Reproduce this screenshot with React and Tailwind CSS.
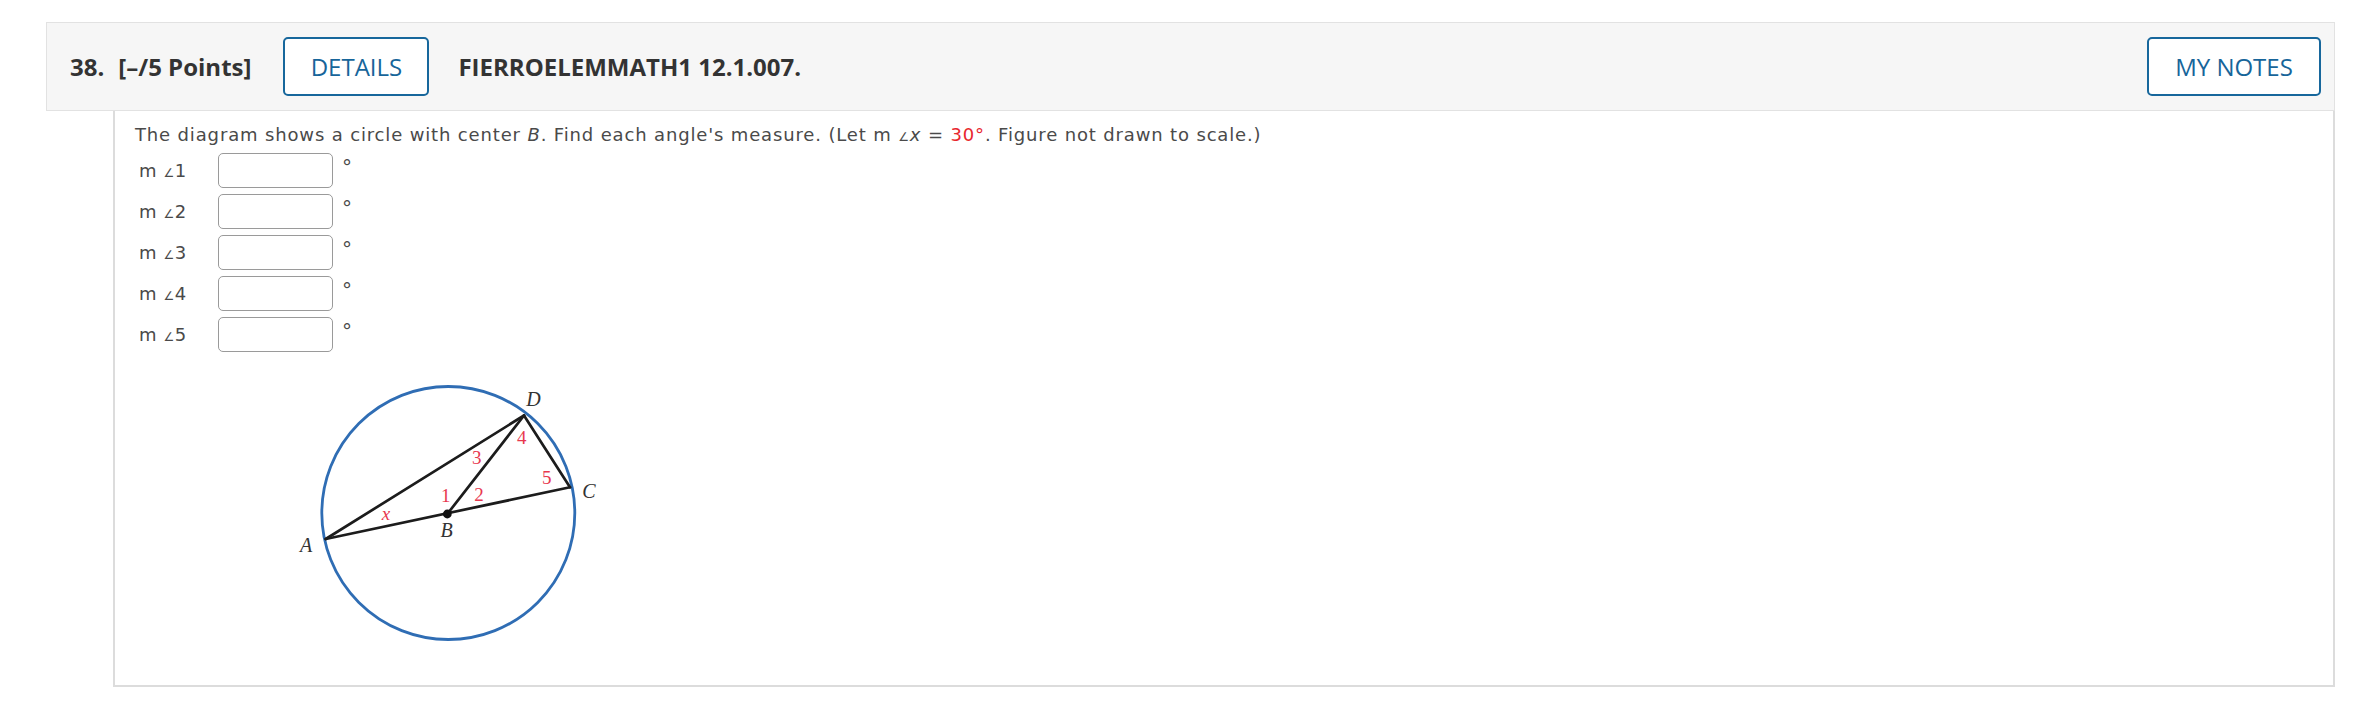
import React from "react";

const rows = ["1", "2", "3", "4", "5"];

function Diagram() {
  const blue = "#2f6db4";
  const red = "#e8384f";
  const ink = "#1c1c1c";
  return (
    <svg width="340" height="280" viewBox="0 0 340 280" className="block">
      <circle cx="168.3" cy="143" r="126.5" fill="none" stroke={blue} strokeWidth="2.8" />
      <g stroke={ink} strokeWidth="2.7" fill="none" strokeLinejoin="round" strokeLinecap="round">
        <line x1="45.7" y1="169" x2="290" y2="117.3" />
        <line x1="45.7" y1="169" x2="244" y2="45.5" />
        <line x1="167.3" y1="144" x2="244" y2="45.5" />
        <line x1="244" y1="45.5" x2="290" y2="117.3" />
      </g>
      <circle cx="167.3" cy="144" r="4.4" fill="#111" />
      <g fontFamily="'Liberation Serif', serif" fontStyle="italic" fontSize="20" fill="#333" textAnchor="middle">
        <text x="253.5" y="36">D</text>
        <text x="309" y="128">C</text>
        <text x="166.5" y="167">B</text>
        <text x="26" y="182">A</text>
      </g>
      <g fontFamily="'Liberation Serif', serif" fontSize="19" fill={red} textAnchor="middle">
        <text x="106" y="150" fontStyle="italic">x</text>
        <text x="165.7" y="132">1</text>
        <text x="199" y="131">2</text>
        <text x="196.7" y="94">3</text>
        <text x="241.7" y="74">4</text>
        <text x="266.7" y="114">5</text>
      </g>
    </svg>
  );
}

export default function App() {
  return (
    <div className="bg-white w-[2360px] h-[711px] pt-[22px] pl-[46px] pr-[25px]">
      <div className="flex items-center h-[89px] border border-[#e2e2e2] bg-[#f6f6f6] pl-[23px] pr-[13px] font-['Open_Sans',sans-serif] text-[#333]">
        <span className="font-bold text-[24px] leading-none">38.</span>
        <span className="font-bold text-[24px] leading-none ml-[14px]">[–/5 Points]</span>
        <button className="ml-[32px] w-[146px] h-[59px] border-2 border-[#17679c] rounded-[5px] bg-white text-[#17659a] text-[24px] font-medium leading-none">
          DETAILS
        </button>
        <span className="ml-[29px] font-bold text-[24px] leading-none">FIERROELEMMATH1 12.1.007.</span>
        <div className="flex-1" />
        <button className="w-[174px] h-[59px] border-2 border-[#17679c] rounded-[5px] bg-white text-[#17659a] text-[24px] font-medium leading-none">
          MY NOTES
        </button>
      </div>
      <div className="ml-[67px] h-[576px] border-l-2 border-r-2 border-b-2 border-[#dcdcdc] bg-white pl-[20px] pt-[12px] font-['DejaVu_Sans',sans-serif] text-[#4a4a4a]">
        <p className="text-[18px] leading-[24px] h-[24px] tracking-[0.85px] whitespace-nowrap">
          The diagram shows a circle with center <i>B</i>. Find each angle's measure. (Let m <span className="text-[12px]">∠</span><i>x</i> = <span className="text-[#e8262e]">30°</span>. Figure not drawn to scale.)
        </p>
        <div className="mt-[6px] flex flex-col gap-[6px]">
          {rows.map((r) => (
            <div key={r} className="flex items-center h-[35px]">
              <span className="w-[83px] pl-[4px] text-[18px] leading-none tracking-[0.6px]">
                m <span className="text-[12px]">∠</span>{r}
              </span>
              <div className="w-[115px] h-[35px] border-[1.5px] border-[#9a9a9a] rounded-[5px] bg-white" />
              <span className="self-start ml-[9px] mt-[4px] text-[20px] leading-none">°</span>
            </div>
          ))}
        </div>
        <div className="mt-[18px] ml-[145px]">
          <Diagram />
        </div>
      </div>
    </div>
  );
}
